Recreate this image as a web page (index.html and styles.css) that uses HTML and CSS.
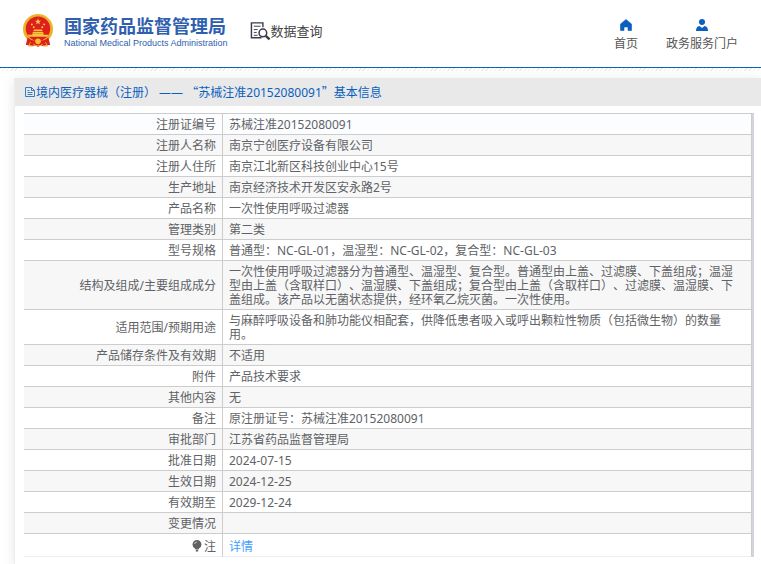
FILE: index.html
```html
<!DOCTYPE html>
<html lang="zh-CN">
<head>
  <meta charset="UTF-8" />
  <meta name="viewport" content="width=device-width, initial-scale=1.0"/>
  <title>国家药品监督管理局 数据查询</title>
  <link rel="stylesheet" href="styles.css">
</head>
<body>
  <header class="header">
    <div class="logo">
      <svg class="emblem" viewBox="0 0 34 36">
        <path d="M9 26 L5 33 L12 34 L17 32 L22 34 L29 33 L25 26 Z" fill="#d8201c"/>
        <circle cx="17" cy="16" r="16" fill="#eeb62c"/>
        <circle cx="17" cy="16" r="14" fill="none" stroke="#e3a723" stroke-width="1" stroke-dasharray="2 1"/>
        <circle cx="17" cy="15.500" r="13" fill="#df1f1c"/>
        <path d="M17 4.500 L17.800 7 L20.200 7.100 L18.300 8.600 L19 11 L17 9.600 L15 11 L15.700 8.600 L13.800 7.100 L16.200 7 Z" fill="#f8d24a"/>
        <circle cx="10.500" cy="11" r="1" fill="#f8d24a"/>
        <circle cx="12.500" cy="14" r="1" fill="#f8d24a"/>
        <circle cx="21.500" cy="14" r="1" fill="#f8d24a"/>
        <circle cx="23.500" cy="11" r="1" fill="#f8d24a"/>
        <path d="M12 18 L13 16.500 H21 L22 18 Z M11 20 L12 18.800 H22 L23 20 Z M6 22 H11 V20.500 H23 V22 H28 L27 24 H7 Z" fill="#f5c63a"/>
        <path d="M6 25 Q9 28 13 28 L17 26 L21 28 Q25 28 28 25 L30 33 Q23 32 20 33 L17 35 L14 33 Q11 32 4 33 Z" fill="#df1f1c"/>
        <circle cx="17" cy="29" r="3" fill="#f2bd31"/>
        <path d="M9 30 L7 34 L12 34 M25 30 L27 34 L22 34 M12 32 Q17 36 22 32" fill="none" stroke="#efb52c" stroke-width="1"/>
      </svg>
      <div class="logo-text">
        <h1>国家药品监督管理局</h1>
        <p>National Medical Products Administration</p>
      </div>
    </div>
    <div class="query">
      <svg class="query-icon" viewBox="0 0 22 20">
        <path d="M12 17 H1.500 V1.500 H13.500 V6" fill="none" stroke="#3c3a4c" stroke-width="1.500"/>
        <path d="M4 5 H11 M4 8.500 H8 M4 11.500 H7 M4 14.500 H8" stroke="#3c3a4c"/>
        <circle cx="13.500" cy="12" r="4" fill="none" stroke="#3c3a4c" stroke-width="1.600"/>
        <path d="M16.500 15 L20.500 18.800" stroke="#3c3a4c" stroke-width="2.500"/>
      </svg>
      <span>数据查询</span>
    </div>
    <nav class="nav">
      <a href="#">
        <svg viewBox="0 0 12 12"><path d="M6 0.500 L11.500 5 V11.500 H8 V8 H4 V11.500 H.5 V5 Z" fill="#0a5fbf" stroke="#0a5fbf" stroke-linejoin="round" stroke-width=".6"/></svg>
        首页
      </a>
      <a href="#">
        <svg viewBox="0 0 12 12"><circle cx="6" cy="3" r="3" fill="#0a5fbf"/><path d="M0 12 Q0 7.500 3.500 7 L6 9 L8.500 7 Q12 7.500 12 12 Z" fill="#0a5fbf"/></svg>
        政务服务门户
      </a>
    </nav>
  </header>

  <main class="card">
    <h2 class="card-title">
      <svg viewBox="0 0 10 12"><path d="M.5 1.500 H6.500 L9.500 4.500 V10.500 H.5 Z M6.500 1.500 V4.500 H9.500 M2.500 4.500 H4.500 M2.500 6.500 H7.500 M2.500 8.500 H7.500" fill="none" stroke="#0a5fbf" stroke-width=".8"/></svg>
      <span>境内医疗器械（注册） —— <span class="quote">“</span>苏械注准20152080091<span class="quote">”</span>基本信息</span>
    </h2>
    <div class="table-wrap">
      <table>
        <tbody>
          <tr><th scope="row">注册证编号</th><td>苏械注准20152080091</td></tr>
          <tr><th scope="row">注册人名称</th><td>南京宁创医疗设备有限公司</td></tr>
          <tr><th scope="row">注册人住所</th><td>南京江北新区科技创业中心15号</td></tr>
          <tr><th scope="row">生产地址</th><td>南京经济技术开发区安永路2号</td></tr>
          <tr><th scope="row">产品名称</th><td>一次性使用呼吸过滤器</td></tr>
          <tr><th scope="row">管理类别</th><td>第二类</td></tr>
          <tr><th scope="row">型号规格</th><td>普通型：NC-GL-01，温湿型：NC-GL-02，复合型：NC-GL-03</td></tr>
          <tr><th scope="row">结构及组成/主要组成成分</th><td>一次性使用呼吸过滤器分为普通型、温湿型、复合型。普通型由上盖、过滤膜、下盖组成；温湿型由上盖（含取样口）、温湿膜、下盖组成；复合型由上盖（含取样口）、过滤膜、温湿膜、下盖组成。该产品以无菌状态提供，经环氧乙烷灭菌。一次性使用。</td></tr>
          <tr><th scope="row">适用范围/预期用途</th><td>与麻醉呼吸设备和肺功能仪相配套，供降低患者吸入或呼出颗粒性物质（包括微生物）的数量用。</td></tr>
          <tr><th scope="row">产品储存条件及有效期</th><td>不适用</td></tr>
          <tr><th scope="row">附件</th><td>产品技术要求</td></tr>
          <tr><th scope="row">其他内容</th><td>无</td></tr>
          <tr><th scope="row">备注</th><td>原注册证号：苏械注准20152080091</td></tr>
          <tr><th scope="row">审批部门</th><td>江苏省药品监督管理局</td></tr>
          <tr><th scope="row">批准日期</th><td>2024-07-15</td></tr>
          <tr><th scope="row">生效日期</th><td>2024-12-25</td></tr>
          <tr><th scope="row">有效期至</th><td>2029-12-24</td></tr>
          <tr><th scope="row">变更情况</th><td></td></tr>
          <tr class="note">
            <th scope="row"><svg viewBox="0 0 10 12"><path d="M5 0 A4.500 4.500 0 0 1 7 8.500 L6.500 9.500 H3.500 L3 8.500 A4.500 4.500 0 0 1 5 0 Z M3.800 10 H6.200 V11.500 H3.800 Z" fill="#606266"/><path d="M2.500 4 Q3 2.200 4.800 2" fill="none" stroke="#fff" stroke-width=".7"/></svg>注</th>
            <td><a href="#">详情</a></td>
          </tr>
        </tbody>
      </table>
    </div>
  </main>
</body>
</html>
```

FILE: styles.css
```css
* {
  margin: 0;
  padding: 0;
  box-sizing: border-box;
}

body {
  font-family: "Noto Sans", "Noto Sans CJK SC", sans-serif;
  font-size: 12px;
  line-height: 14px;
  color: #606266;
  background: #fff;
  text-spacing-trim: space-all;
  overflow-x: hidden;
}

a {
  text-decoration: none;
}

.header {
  display: flex;
  align-items: center;
  height: 68px;
  padding: 0 23px 6px 22px;
  border-bottom: 1px solid #0a5fbf;
}

/* hatched strip under the header line */
.header + .card::before {
  content: "";
  position: absolute;
  top: 68px;
  left: 0;
  right: 0;
  height: 3px;
  background: repeating-linear-gradient(135deg, #ececec 0 1px, #fff 1px 3px);
}

.logo {
  display: flex;
  align-items: center;
  gap: 10px;
}

.emblem {
  width: 32px;
  height: 36px;
}

.logo-text h1 {
  font-size: 18px;
  line-height: 24px;
  font-weight: 700;
  color: #2f5fae;
}

.logo-text p {
  font-family: "Liberation Sans", Arial, sans-serif;
  font-size: 9px;
  line-height: 10px;
  color: #2f5fae;
  white-space: nowrap;
}

.query {
  display: flex;
  align-items: center;
  margin-left: 22px;
  font-size: 13px;
  color: #444;
}

.query-icon {
  width: 21px;
  height: 20px;
}

.nav {
  display: flex;
  gap: 28px;
  margin-left: auto;
}

.nav a {
  display: flex;
  flex-direction: column;
  align-items: center;
  gap: 6px;
  padding-top: 8px;
  color: #555;
}

.nav svg {
  width: 12px;
  height: 12px;
}

.card {
  margin: 10px 0 0 14px;
  background: #fff;
  border-left: 1px solid #ebeef5;
  box-shadow: 0 2px 12px rgba(0, 0, 0, 0.1);
}

.card-title {
  display: flex;
  align-items: center;
  gap: 1px;
  height: 28px;
  padding: 0 10px;
  font-size: 12px;
  font-weight: 400;
  color: #0a5fbf;
  background: #e9e9e9;
}

.card-title svg {
  width: 10px;
  height: 12px;
}

.quote {
  font-family: "Noto Sans CJK SC", sans-serif;
}

.table-wrap {
  margin: 7px 7px 0 9px;
  padding-bottom: 8px;
}

table {
  width: 100%;
  border-collapse: separate;
  border-spacing: 0;
  border-top: 1px solid #ccc;
  border-right: 2px solid #d3d4dc;
}

th, td {
  padding: 4px 6px 2px;
  border-bottom: 1px solid #ccc;
  vertical-align: middle;
}

th {
  width: 199px;
  font-weight: 400;
  text-align: right;
  border-right: 1px solid #ccc;
}

td {
  height: 21px;
  padding-right: 8px;
  border-right: 1px solid #ccc;
}

tr:first-child {
  background: #fcfdff;
}

tr:nth-child(even) {
  background: #f7f7f7;
}

.note th, .note td {
  height: 23px;
  padding-top: 6px;
  border-bottom-color: #ebeef5;
}

.note svg {
  width: 10px;
  height: 12px;
  margin-right: 2px;
  vertical-align: -1px;
}

.note a {
  color: #409eff;
}
```
